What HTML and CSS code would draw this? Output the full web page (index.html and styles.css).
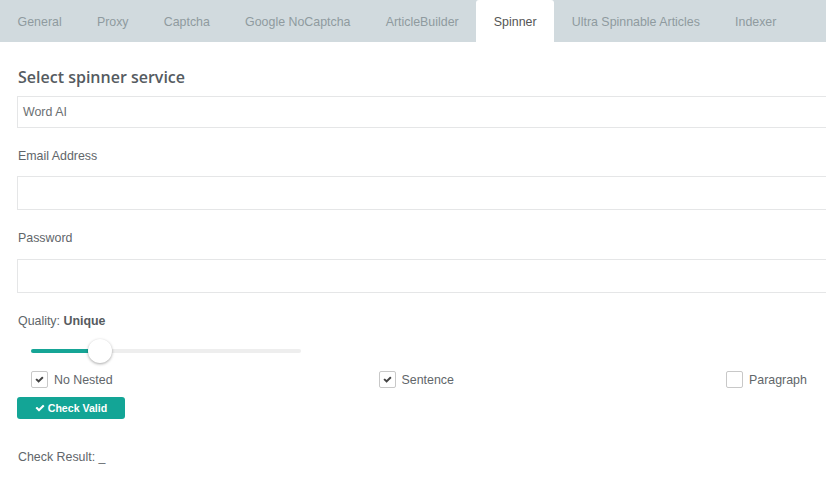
FILE: index.html
```html
<!DOCTYPE html>
<html lang="en">
<head>
<meta charset="UTF-8">
<meta name="viewport" content="width=device-width, initial-scale=1.0">
<title>Settings - Spinner</title>
<link rel="stylesheet" href="styles.css">
</head>
<body>
<div class="page">
    <ul class="tabs">
        <li class="tab">General</li>
        <li class="tab">Proxy</li>
        <li class="tab">Captcha</li>
        <li class="tab">Google NoCaptcha</li>
        <li class="tab">ArticleBuilder</li>
        <li class="tab active">Spinner</li>
        <li class="tab">Ultra Spinnable Articles</li>
        <li class="tab">Indexer</li>
    </ul>
    <div class="tab-content">
        <h3>Select spinner service</h3>
        <div class="select">Word AI</div>

        <label class="field-label label-email">Email Address</label>
        <div class="input"></div>

        <label class="field-label label-password">Password</label>
        <div class="input"></div>

        <div class="field-label label-quality">Quality: <b>Unique</b></div>
        <div class="slider">
            <div class="slider-fill"></div>
            <div class="slider-handle"></div>
        </div>

        <div class="options">
            <div class="option">
                <span class="checkbox checked">
                    <svg viewBox="0 0 1792 1792" width="9" height="9"><path d="M1671 566q0 40-28 68l-724 724-136 136q-28 28-68 28t-68-28l-136-136-362-362q-28-28-28-68t28-68l136-136q28-28 68-28t68 28l294 295 656-657q28-28 68-28t68 28l136 136q28 28 28 68z"/></svg>
                </span>
                No Nested
            </div>
            <div class="option">
                <span class="checkbox checked">
                    <svg viewBox="0 0 1792 1792" width="9" height="9"><path d="M1671 566q0 40-28 68l-724 724-136 136q-28 28-68 28t-68-28l-136-136-362-362q-28-28-28-68t28-68l136-136q28-28 68-28t68 28l294 295 656-657q28-28 68-28t68 28l136 136q28 28 28 68z"/></svg>
                </span>
                Sentence
            </div>
            <div class="option">
                <span class="checkbox"></span>
                Paragraph
            </div>
        </div>

        <button class="button">
            <svg viewBox="0 0 1792 1792" width="10" height="10"><path d="M1671 566q0 40-28 68l-724 724-136 136q-28 28-68 28t-68-28l-136-136-362-362q-28-28-28-68t28-68l136-136q28-28 68-28t68 28l294 295 656-657q28-28 68-28t68 28l136 136q28 28 28 68z"/></svg>
            Check Valid
        </button>

        <div class="result">Check Result: _</div>
    </div>
</div>
</body>
</html>
```

FILE: styles.css
```css
html, body {
    margin: 0;
    padding: 0;
    overflow: hidden;
    background-color: #fff;
}
body {
    font-family: "Liberation Sans", Arial, sans-serif;
    font-size: 12.4px;
    color: #676a6c;
}
.page {
    width: 1080px;
}
.tabs {
    list-style: none;
    margin: 0;
    padding: 0;
    display: flex;
    height: 42px;
    background-color: #d1dade;
}
.tab {
    padding: 0 17.6px;
    line-height: 44px;
    color: #8f9a9f;
    border-radius: 3px 3px 0 0;
}
.tab.active {
    background-color: #fff;
    color: #555;
}
.tab-content {
    padding: 0 0 0 17px;
}
h3 {
    font-family: "Open Sans", sans-serif;
    font-weight: 600;
    font-size: 16px;
    line-height: 20px;
    color: #555b61;
    margin: 25px 0 9px 1px;
}
.select {
    height: 30px;
    line-height: 30px;
    border: 1px solid #e5e6e7;
    padding-left: 5px;
    color: #6b6f72;
}
.field-label {
    display: block;
    line-height: 18px;
    padding-left: 1px;
    color: #61666a;
}
.label-email {
    margin: 19px 0 11px;
}
.label-password {
    margin: 19px 0 12px;
}
.label-quality {
    margin: 19px 0 0;
}
.label-quality b {
    color: #565b60;
}
.input {
    height: 32px;
    border: 1px solid #e5e6e7;
}
.slider {
    position: relative;
    margin: 19px 0 0 14px;
    width: 270px;
    height: 4px;
    background-color: #eeeeee;
    border-radius: 2px;
}
.slider-fill {
    width: 70px;
    height: 100%;
    background-color: #16a596;
    border-radius: 2px;
}
.slider-handle {
    position: absolute;
    left: 57px;
    top: -10px;
    width: 24px;
    height: 24px;
    border-radius: 50%;
    background-color: #fff;
    box-shadow: 0 1px 3px rgba(0, 0, 0, 0.35);
}
.options {
    display: grid;
    grid-template-columns: repeat(3, 347.5px);
    margin-top: 18px;
}
.option {
    display: flex;
    align-items: center;
    gap: 6px;
    padding-left: 14px;
    height: 17px;
    color: #61666a;
}
.checkbox {
    box-sizing: border-box;
    width: 17px;
    height: 17px;
    border: 1px solid #c8c8c8;
    border-radius: 2px;
    display: flex;
    align-items: center;
    justify-content: center;
    fill: #444;
}
.button {
    margin-top: 9px;
    width: 108px;
    height: 22px;
    padding: 0;
    border: none;
    border-radius: 3px;
    background-color: #13a596;
    color: #fff;
    font-family: "Liberation Sans", Arial, sans-serif;
    font-size: 10.6px;
    font-weight: bold;
    display: flex;
    align-items: center;
    justify-content: center;
    gap: 3px;
    fill: #fff;
}
.result {
    margin-top: 29px;
    line-height: 18px;
    padding-left: 1px;
    color: #61666a;
}
```
